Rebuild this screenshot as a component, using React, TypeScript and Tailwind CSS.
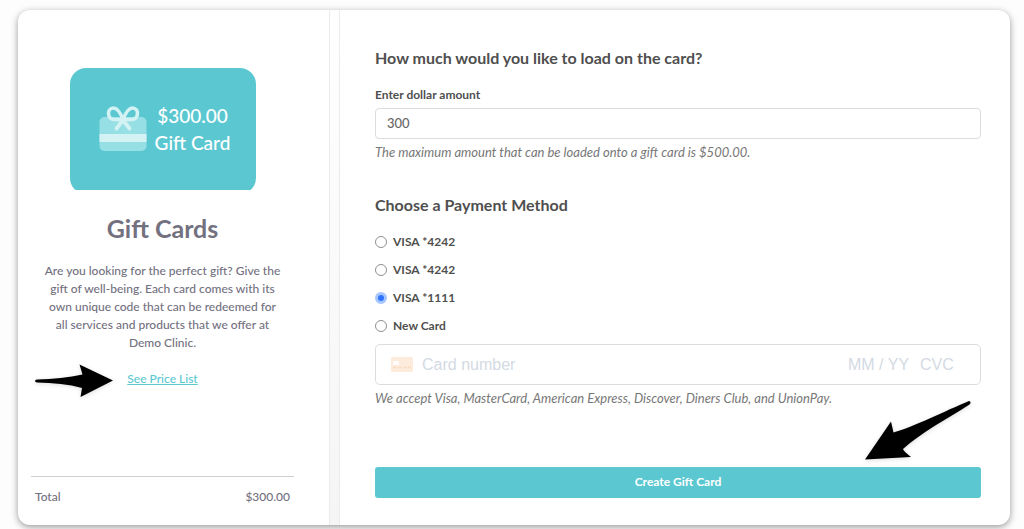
import { useState } from 'react';

interface PaymentMethod {
  id: string;
  label: string;
}

const paymentMethods: PaymentMethod[] = [
  { id: 'card-1', label: 'VISA *4242' },
  { id: 'card-2', label: 'VISA *4242' },
  { id: 'card-3', label: 'VISA *1111' },
  { id: 'new', label: 'New Card' },
];

function GiftIcon() {
  return (
    <svg width="48" height="46" viewBox="0 0 48 46" fill="none" aria-hidden="true">
      <rect x="0.5" y="11" width="47" height="34" rx="5" fill="#96dfe4" />
      <rect x="0.5" y="28" width="47" height="8" fill="#d3f2f4" />
      <path
        d="M24 13.5C21.5 7 18.5 2 14.5 2C11 2 9.5 5 9.5 7.5C9.5 11.5 12.5 13.5 16 13.5H32C35.5 13.5 38.5 11.5 38.5 7.5C38.5 5 37 2 33.5 2C29.5 2 26.5 7 24 13.5Z"
        stroke="#d3f2f4"
        strokeWidth="3.6"
        strokeLinejoin="round"
      />
      <path d="M24 14L17.5 22.5M24 14L30.5 22.5" stroke="#d3f2f4" strokeWidth="3.8" strokeLinecap="round" />
    </svg>
  );
}

function CardIcon() {
  return (
    <svg width="22" height="15" viewBox="0 0 22 15" className="shrink-0" aria-hidden="true">
      <rect width="22" height="15" rx="1.5" fill="#fdebdc" />
      <rect x="2" y="4" width="6" height="4" rx="1" fill="#fffdfb" />
      <path d="M2 10.5H20" stroke="#f8dcc4" strokeWidth="1.5" strokeDasharray="4 1" />
    </svg>
  );
}

function Summary() {
  return (
    <aside className="w-[311px] shrink-0 flex flex-col pt-[58px] pb-[19px] pl-[13px] pr-[35px] text-center text-[#73717f]">
      <div className="w-[186px] h-[122px] mx-auto overflow-hidden">
        <div className="h-[126px] rounded-2xl bg-[#5bc8d1] flex items-center justify-center gap-2 pl-1 pb-[5px] text-white">
          <GiftIcon />
          <div className="text-[19px] leading-[27px] font-medium">
            <div>$300.00</div>
            <div>Gift Card</div>
          </div>
        </div>
      </div>

      <h1 className="mt-[22px] text-[25px] leading-8 font-bold">Gift Cards</h1>

      <p className="mt-[18px] text-[12px] leading-[18px] font-medium">
        Are you looking for the perfect gift? Give the
        <br />
        gift of well-being. Each card comes with its
        <br />
        own unique code that can be redeemed for
        <br />
        all services and products that we offer at
        <br />
        Demo Clinic.
      </p>

      <div className="relative mt-[18px] text-[12px] leading-[18px] font-medium">
        <a href="#prices" className="text-[#5bc8d1] underline">
          See Price List
        </a>
        <svg width="82" height="38" viewBox="0 0 82 38" className="absolute left-[2px] -top-2 drop-shadow-sm" aria-hidden="true">
          <path d="M4 17.5C20 17 36 15.5 49.5 12.5L46.5 2.5L80 18.5L47.5 35L49 26C36 22 20 21 4 20.5C1.5 20 1.5 18 4 17.5Z" fill="#000" />
        </svg>
      </div>

      <div className="mt-auto border-t border-[#cfcfcf] pt-[11px] px-1 flex justify-between text-[12px] leading-[18px] font-medium">
        <span>Total</span>
        <span>$300.00</span>
      </div>
    </aside>
  );
}

function PaymentForm() {
  const [amount, setAmount] = useState('300');
  const [method, setMethod] = useState('card-3');

  return (
    <form className="flex-1 min-w-0 pt-9 pb-[27px] pl-[35px] pr-[29px] text-[#4f4f4f]" onSubmit={(e) => e.preventDefault()}>
      <h2 className="text-base leading-6 font-bold">How much would you like to load on the card?</h2>

      <label htmlFor="amount" className="mt-4 block text-[12px] leading-[18px] font-bold">
        Enter dollar amount
      </label>
      <input
        id="amount"
        value={amount}
        onChange={(e) => setAmount(e.target.value)}
        className="mt-1 block w-full h-[31px] rounded border border-[#dcdcdc] px-[11px] pb-[2px] text-[13px] font-medium text-[#666] outline-none"
      />
      <p className="mt-1 text-[13px] leading-[18px] italic text-[#777]">
        The maximum amount that can be loaded onto a gift card is $500.00.
      </p>

      <h2 className="mt-8 text-base leading-6 font-bold">Choose a Payment Method</h2>
      <div className="mt-4 flex flex-col gap-[10px]">
        {paymentMethods.map((item) => (
          <label key={item.id} className="flex items-center gap-[6px] text-[12px] leading-[18px] font-bold">
            <input
              type="radio"
              name="method"
              checked={method === item.id}
              onChange={() => setMethod(item.id)}
              className="appearance-none w-3 h-3 rounded-full border border-[#8f8f8f] checked:border-[3px] checked:border-[#a5c6ff] checked:bg-[#2f74ff]"
            />
            {item.label}
          </label>
        ))}
      </div>

      {/* Card details */}
      <div className="mt-[9px] h-[41px] flex items-center rounded-[5px] border border-[#dcdcdc] pl-[15px] pr-6 font-['Liberation_Sans',Arial,sans-serif] text-base">
        <CardIcon />
        <input aria-label="Card number" placeholder="Card number" className="ml-[9px] flex-1 min-w-0 outline-none placeholder:text-[#d3dae3]" />
        <input aria-label="Expiry date" placeholder="MM / YY" className="w-[72px] outline-none placeholder:text-[#d3dae3]" />
        <input aria-label="CVC" placeholder="CVC" className="w-9 outline-none placeholder:text-[#d3dae3]" />
      </div>
      <p className="mt-1 text-[13px] leading-[18px] italic text-[#777]">
        We accept Visa, MasterCard, American Express, Discover, Diners Club, and UnionPay.
      </p>

      <div className="relative mt-[60px]">
        <button type="submit" className="block w-full h-[31px] rounded-[3px] bg-[#5bc8d1] pb-[2px] text-[12px] font-bold text-white">
          Create Gift Card
        </button>
        <svg width="110" height="66" viewBox="0 0 110 66" className="absolute right-[8px] -top-[69px] drop-shadow-sm" aria-hidden="true">
          <path d="M106 3C108 3.5 108 5.5 106.5 6.5C84 21 59 34 40 51C41 54 45 56 48 59L2 61.5L28 23.5L30.5 34.5C50 29 82 13 106 3Z" fill="#000" />
        </svg>
      </div>
    </form>
  );
}

export default function App() {
  return (
    <div className="min-h-screen flex bg-[#fdfdfd] pt-[10px] pb-1 pl-[18px] pr-[14px] font-['Lato',sans-serif]">
      <main className="flex-1 flex rounded-xl bg-white overflow-hidden shadow-[0_2px_7px_rgba(0,0,0,0.4)]">
        <Summary />
        <div className="w-[11px] shrink-0 border-x border-[#ebebeb] bg-linear-to-b from-white to-[#f5f5f5]" />
        <PaymentForm />
      </main>
    </div>
  );
}
